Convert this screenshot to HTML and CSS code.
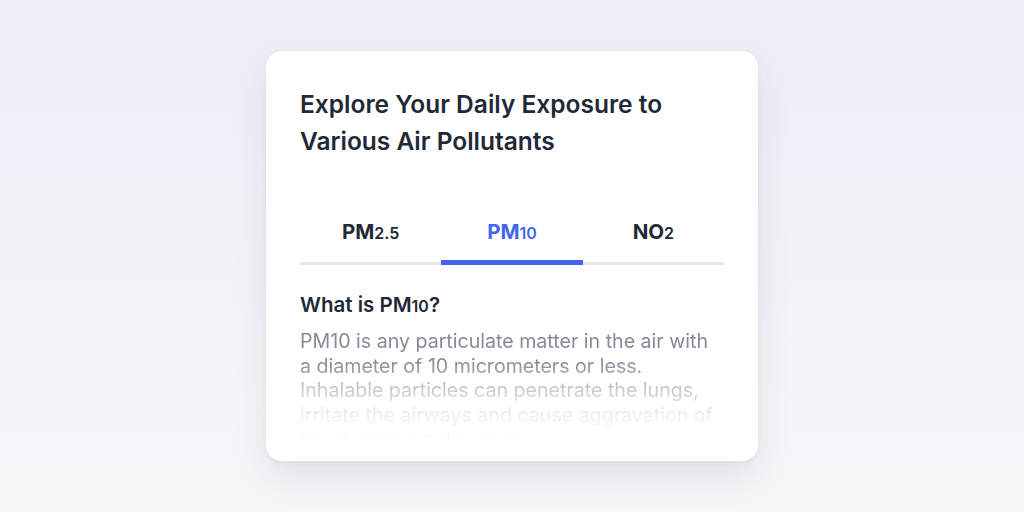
FILE: index.html
```html
<!DOCTYPE html>
<html lang="en">
<head>
    <meta charset="UTF-8">
    <meta name="viewport" content="width=device-width, initial-scale=1.0">
    <title>Air Pollutants</title>
    <link rel="stylesheet" href="styles.css">
</head>
<body>
    <div class="card">
        <h1>Explore Your Daily Exposure to Various Air Pollutants</h1>

        <div class="tabs">
            <button class="tab">PM<small>2.5</small></button>
            <button class="tab active">PM<small>10</small></button>
            <button class="tab">NO<small>2</small></button>
        </div>

        <div class="info">
            <h2>What is PM<small>10</small>?</h2>
            <p>PM10 is any particulate matter in the air with a diameter of 10 micrometers or less. Inhalable particles can penetrate the lungs, irritate the airways and cause aggravation of heart and lung diseases.</p>
        </div>
    </div>
</body>
</html>
```

FILE: styles.css
```css
html, body {
    height: 100%;
}
body {
    margin: 0;
    font-family: Inter, "Noto Sans", sans-serif;
    background: linear-gradient(180deg, #eceef8 0%, #f6f7f7 100%);
    display: flex;
    align-items: center;
    justify-content: center;
}
.card {
    width: 492px;
    height: 410px;
    box-sizing: border-box;
    padding: 35px 34px 0;
    background: #fff;
    border-radius: 16px;
    box-shadow: 0 18px 36px rgba(30, 35, 50, 0.09), 0 2px 6px rgba(30, 35, 50, 0.04);
    overflow: hidden;
}
h1 {
    margin: 0;
    font-size: 24.5px;
    font-weight: 600;
    line-height: 37px;
    color: #1f2937;
}
.tabs {
    display: flex;
    margin-top: 59px;
    border-bottom: 3px solid #e6e6e8;
}
.tab {
    flex: 1;
    background: none;
    border: none;
    padding: 0 0 16px;
    margin-bottom: -3px;
    font-family: inherit;
    font-size: 20.5px;
    font-weight: 700;
    color: #1f2937;
    border-bottom: 5px solid transparent;
    cursor: pointer;
}
.tab small {
    font-size: 16px;
    font-weight: 600;
}
.tab.active {
    color: #4166e9;
    border-bottom-color: #4166e9;
}
.info {
    margin-top: 27px;
    padding-right: 8px;
}
h2 {
    margin: 0;
    font-size: 20.5px;
    font-weight: 600;
    color: #1f2937;
}
h2 small {
    font-size: 16px;
}
.info p {
    margin: 12px 0 0;
    font-size: 19.6px;
    line-height: 24.6px;
    color: #868b98;
    -webkit-mask-image: linear-gradient(180deg, #000 30%, rgba(0,0,0,0.45) 56%, rgba(0,0,0,0.13) 80%, rgba(0,0,0,0.03) 100%);
    mask-image: linear-gradient(180deg, #000 30%, rgba(0,0,0,0.45) 56%, rgba(0,0,0,0.13) 80%, rgba(0,0,0,0.03) 100%);
    height: 108px;
    overflow: hidden;
}
```
